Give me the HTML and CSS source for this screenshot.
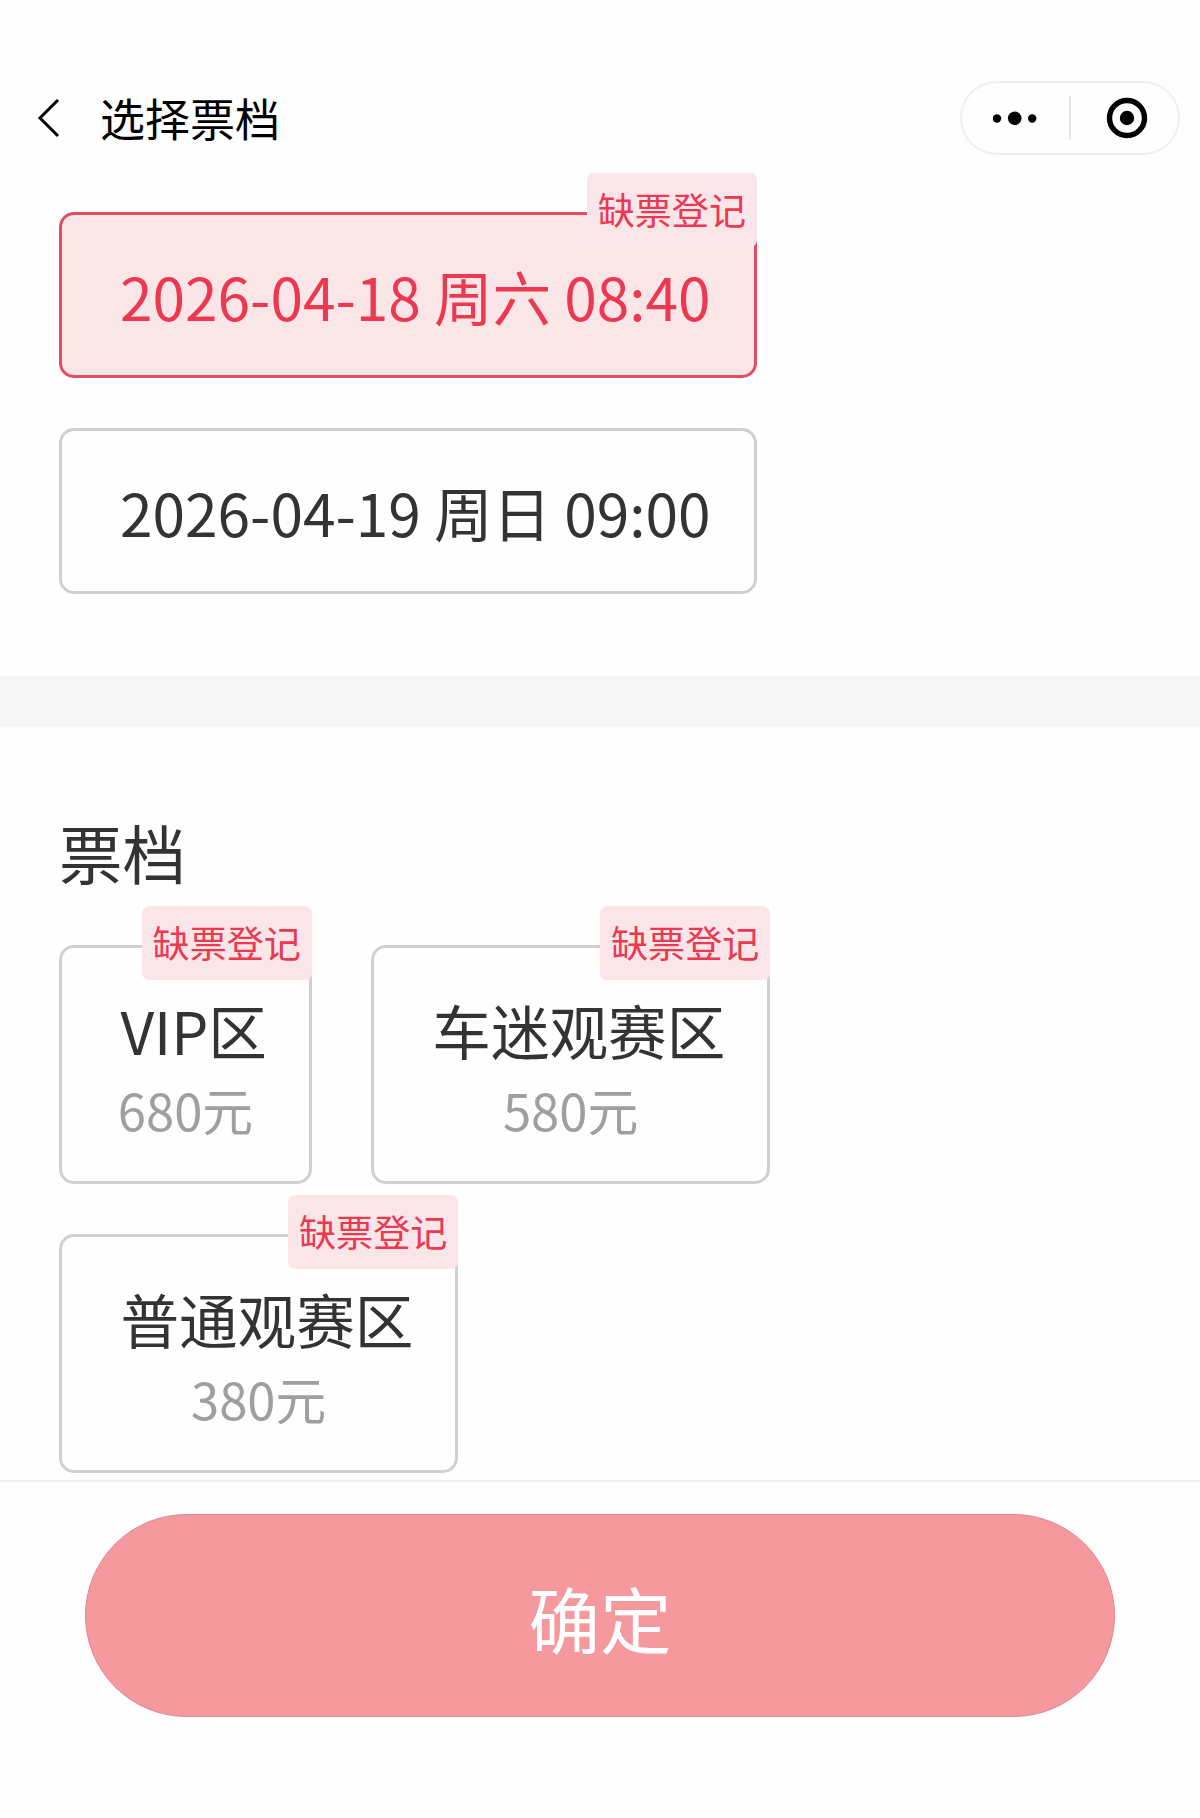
FILE: index.html
```
<!DOCTYPE html>
<html lang="zh-CN">
<head>
<meta charset="utf-8">
<title>选择票档</title>
<link rel="stylesheet" href="styles.css">
</head>

<body>
    <div class="header">
        <svg class="back" width="24" height="42" viewBox="0 0 24 42">
            <path d="M22 3 L4 21 L22 39" fill="none" stroke="#000" stroke-width="3"/>
        </svg>
        <h1>选择票档</h1>
        <div class="capsule">
            <svg class="dots" width="44" height="14" viewBox="0 0 44 14">
                <circle cx="4" cy="7.5" r="4.2"/>
                <circle cx="21.7" cy="7.2" r="6.8"/>
                <circle cx="39.2" cy="7.5" r="4.2"/>
            </svg>
            <span class="line"></span>
            <svg class="close" width="42" height="42" viewBox="0 0 42 42">
                <circle cx="21" cy="21" r="17.5" fill="none" stroke="#000" stroke-width="5.4"/>
                <circle cx="21" cy="21" r="7.2"/>
            </svg>
        </div>
    </div>

    <div class="dates">
        <div class="item date active">2026-04-18 周六 08:40<span class="badge">缺票登记</span></div>
        <div class="item date">2026-04-19 周日 09:00</div>
    </div>

    <div class="tickets">
        <h2>票档</h2>
        <div class="list">
            <div class="item ticket">
                <span class="badge">缺票登记</span>
                <div class="name">VIP区</div>
                <div class="price">680元</div>
            </div>
            <div class="item ticket">
                <span class="badge">缺票登记</span>
                <div class="name">车迷观赛区</div>
                <div class="price">580元</div>
            </div>
            <div class="item ticket">
                <span class="badge">缺票登记</span>
                <div class="name">普通观赛区</div>
                <div class="price">380元</div>
            </div>
        </div>
    </div>

    <div class="footer">
        <button class="btn">确定</button>
    </div>
</body>
</html>
```
FILE: styles.css
```
*{
    box-sizing: border-box;
}
body{
    margin: 0;
    height: 1818px;
    display: flex;
    flex-direction: column;
    background-color: #fefefe;
    color: #333;
    font-family: "Noto Sans CJK SC", sans-serif;
}
h1, h2{
    margin: 0;
    font-weight: 400;
}
.header{
    display: flex;
    align-items: center;
    height: 156px;
    padding: 80px 20px 0 36px;
}
.header h1{
    margin-left: 40px;
    color: #000;
    font-size: 45px;
    line-height: 74px;
    padding-bottom: 1px;
}
.capsule{
    display: flex;
    align-items: center;
    width: 220px;
    height: 74px;
    margin-left: auto;
    border: 2px solid #f0f0f0;
    border-radius: 37px;
}
.dots{
    margin-left: 31px;
}
.line{
    width: 2px;
    height: 44px;
    margin-left: 32px;
    background: #e6e6e6;
}
.close{
    margin-left: 35px;
}
.dates{
    display: flex;
    flex-direction: column;
    align-items: flex-start;
    gap: 50px;
    height: 520px;
    padding: 56px 59px 0;
}
.item{
    position: relative;
    border: 3px solid #d0d0d0;
    border-radius: 15px;
}
.date{
    height: 166px;
    width: 698px;
    padding-left: 58px;
    font-size: 58.6px;
    line-height: 161px;
    white-space: nowrap;
}
.active{
    color: #ec3851;
    border-color: #e24d64;
    background: #fae5e7;
}
.badge{
    position: absolute;
    top: -42px;
    right: -3px;
    height: 74px;
    padding: 0 11px;
    border-radius: 7px;
    background: #fae6e8;
    color: #ec3851;
    font-size: 37.1px;
    line-height: 73px;
    white-space: nowrap;
}
.tickets{
    height: 804px;
    padding: 78px 59px 0;
    border-top: 51px solid #f6f6f6;
}
.tickets h2{
    font-size: 63.4px;
    line-height: 92px;
}
.list{
    display: flex;
    flex-wrap: wrap;
    gap: 50px 59px;
    margin-top: 48px;
}
.ticket{
    height: 239px;
    padding-top: 38px;
    text-align: center;
}
.name{
    padding: 0 42px 0 58.4px;
    font-size: 58.6px;
    line-height: 88px;
}
.price{
    color: #9f9f9f;
    font-size: 50.8px;
    line-height: 70px;
}
.footer{
    flex: 1;
    padding: 32px 85px 0;
    border-top: 2px solid #f1f1f1;
}
.btn{
    display: block;
    width: 100%;
    height: 203px;
    padding: 2px 0 0;
    border: 1px solid #dc8893;
    border-radius: 102px;
    background: #f5999f;
    color: #fff;
    font-family: inherit;
    font-size: 71.5px;
    line-height: 200px;
}
```
